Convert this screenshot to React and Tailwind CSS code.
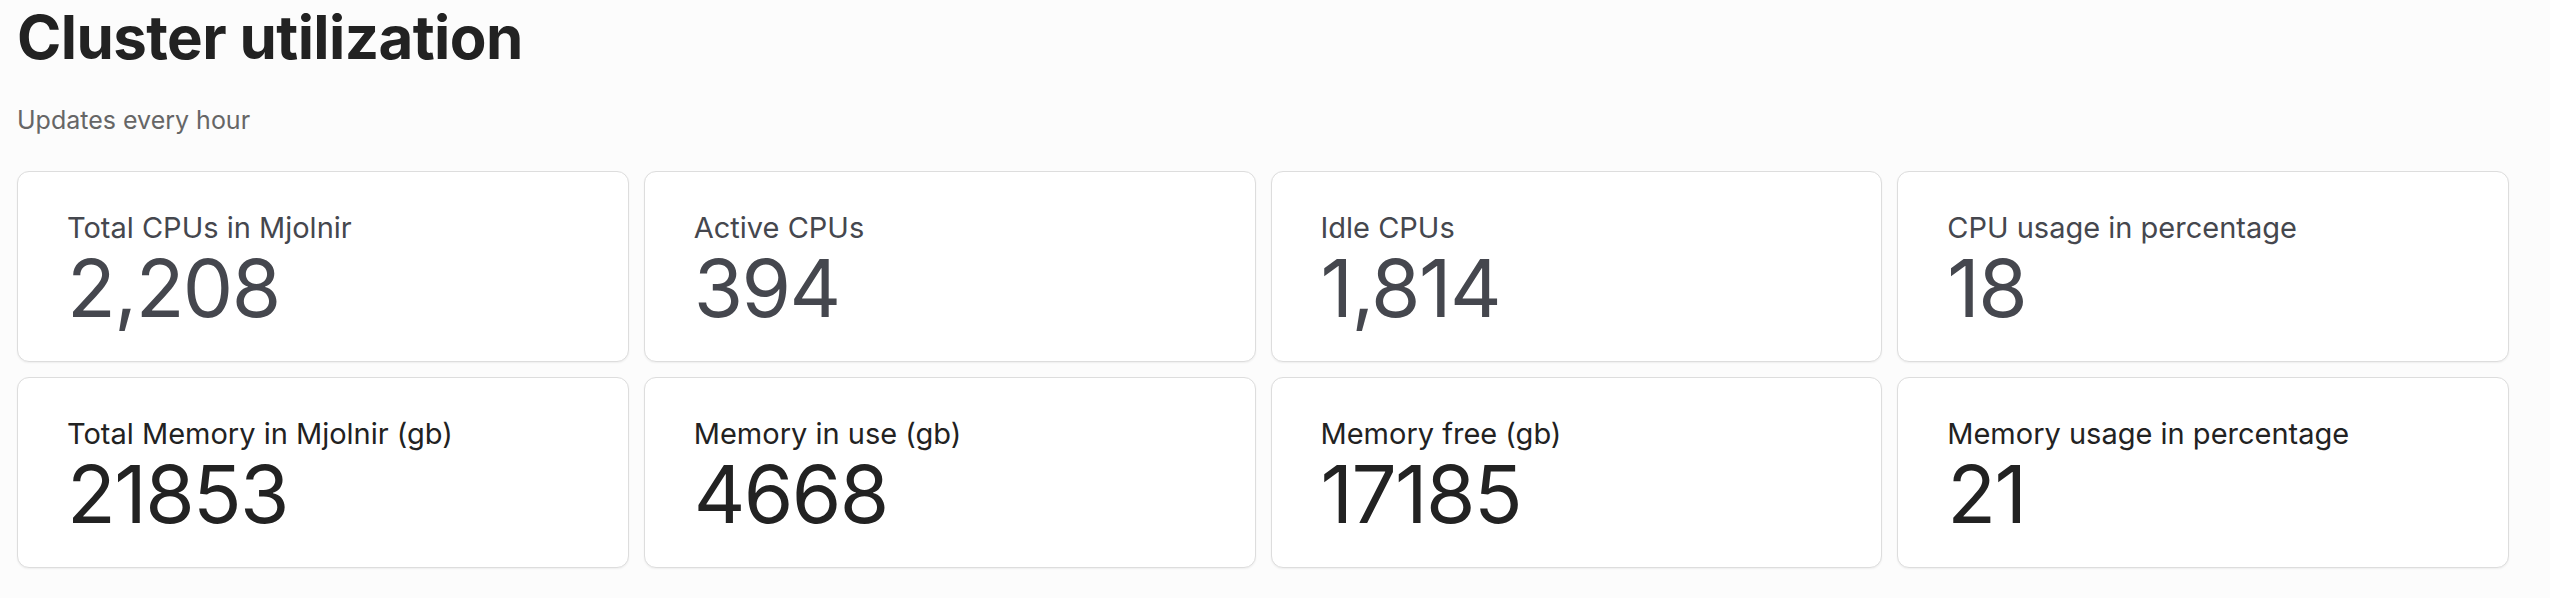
const cpuStats = [
  { label: 'Total CPUs in Mjolnir', value: '2,208' },
  { label: 'Active CPUs', value: '394' },
  { label: 'Idle CPUs', value: '1,814' },
  { label: 'CPU usage in percentage', value: '18' },
]

const memoryStats = [
  { label: 'Total Memory in Mjolnir (gb)', value: '21853' },
  { label: 'Memory in use (gb)', value: '4668' },
  { label: 'Memory free (gb)', value: '17185' },
  { label: 'Memory usage in percentage', value: '21' },
]

const StatCard = ({ label, value, dark }) => {
  return (
    <div className="flex h-[191px] flex-col justify-center rounded-[12px] border border-[#dddddd] bg-white pl-[49px] pt-[6px] shadow-[0_1px_2px_rgba(0,0,0,0.06)]">
      <div
        className={
          dark
            ? 'text-[29px] leading-[36px] text-[#222222]'
            : 'text-[29px] leading-[36px] text-[#45474e]'
        }
      >
        {label}
      </div>
      <div
        className={
          dark
            ? 'text-[80px] leading-[84px] tracking-[-0.02em] text-[#222222]'
            : 'text-[80px] leading-[84px] tracking-[-0.02em] text-[#45474e]'
        }
      >
        {value}
      </div>
    </div>
  )
}

export default function App() {
  return (
    <div
      className="min-h-[598px] w-[2550px] bg-[#fcfcfc] pl-[17px]"
      style={{ fontFamily: 'Inter, "Noto Sans", sans-serif' }}
    >
      <h1 className="pt-[1px] text-[60px] font-bold leading-[72px] tracking-[-0.01em] text-[#222222]">
        Cluster utilization
      </h1>
      <p className="mt-[33px] text-[25px] leading-[28px] text-[#666666]">
        Updates every hour
      </p>
      <div className="mt-[37px] grid w-[2492px] grid-cols-4 gap-[15px]">
        {cpuStats.map((s) => (
          <StatCard key={s.label} label={s.label} value={s.value} />
        ))}
        {memoryStats.map((s) => (
          <StatCard key={s.label} label={s.label} value={s.value} dark />
        ))}
      </div>
    </div>
  )
}
